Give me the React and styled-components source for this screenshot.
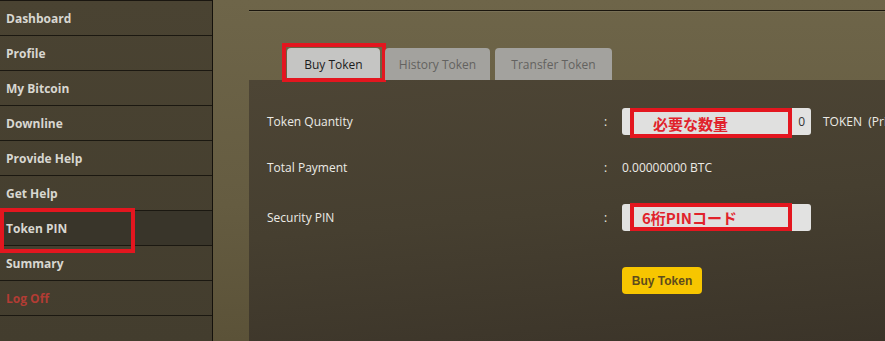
import React from 'react'
import styled, { createGlobalStyle } from 'styled-components'

const GlobalStyle = createGlobalStyle`
  html, body {
    margin: 0;
    padding: 0;
    width: 885px;
    height: 341px;
    overflow: hidden;
    background: #6a6146;
    font-family: "Open Sans", "Noto Sans", sans-serif;
  }
`

const menu = [
  { label: 'Dashboard' },
  { label: 'Profile' },
  { label: 'My Bitcoin' },
  { label: 'Downline' },
  { label: 'Provide Help' },
  { label: 'Get Help' },
  { label: 'Token PIN', active: true, marked: true },
  { label: 'Summary' },
  { label: 'Log Off', danger: true },
]

const Page = styled.div`
  display: flex;
  width: 885px;
  height: 341px;
  overflow: hidden;
`

const Sidebar = styled.nav`
  width: 213px;
  flex-shrink: 0;
  border-right: 1px solid #14110c;
  border-top: 1px solid #1a1610;
  background: linear-gradient(180deg, #4a4332 0%, #433d2e 100%);
  box-sizing: border-box;
`

const MenuItem = styled.div`
  position: relative;
  height: 34px;
  border-bottom: 1px solid #1b1811;
  display: flex;
  align-items: center;
  padding-left: 6px;
  font-size: 12px;
  font-weight: 700;
  color: ${p => (p.$danger ? '#b23c34' : '#d8d7d1')};
  background: ${p => (p.$active ? '#39352a' : 'transparent')};
`

const MenuMark = styled.span`
  position: absolute;
  left: 0;
  top: -3px;
  width: 135px;
  height: 45px;
  border: 4px solid #e3161f;
  box-sizing: border-box;
`

const Main = styled.main`
  flex: 1;
  display: flex;
  flex-direction: column;
  padding-left: 36px;
  background: linear-gradient(180deg, #6e6549 0%, #655c41 60%, #5b5238 100%);
`

const TopRule = styled.div`
  margin-top: 10px;
  height: 1px;
  background: #1a160e;
  box-shadow: 0 1px 0 rgba(255, 255, 255, 0.08);
`

const Tabs = styled.div`
  display: flex;
  margin-top: 37px;
  padding-left: 38px;
  gap: 5px;
`

const Tab = styled.div`
  position: relative;
  height: 32px;
  display: flex;
  align-items: center;
  justify-content: center;
  min-width: ${p => p.$w}px;
  font-size: 12px;
  border-radius: 4px 4px 0 0;
  background: ${p => (p.$active ? '#c5c5c3' : '#a3a29e')};
  color: ${p => (p.$active ? '#1c1c1c' : '#636260')};
`

const TabMark = styled.span`
  position: absolute;
  left: -5px;
  right: -6px;
  top: -5px;
  bottom: -2px;
  border: 4px solid #e3161f;
`

const Panel = styled.section`
  flex: 1;
  padding: 28px 0 0 18px;
  background: linear-gradient(175deg, #4d4535 0%, #463f30 50%, #3b3429 100%);
`

const Row = styled.div`
  display: grid;
  grid-template-columns: 337px 18px auto;
  align-items: center;
  height: 27px;
  margin-top: ${p => p.$mt || 0}px;
  font-size: 12px;
  color: #ecebe6;
`

const Field = styled.div`
  display: flex;
  align-items: center;
`

const Input = styled.div`
  position: relative;
  width: 189px;
  height: 27px;
  background: #e2e2e1;
  border-radius: 3px;
  display: flex;
  align-items: center;
  justify-content: flex-end;
  padding-right: 6px;
  box-sizing: border-box;
  font-size: 12px;
  color: #333;
`

const Note = styled.span`
  position: absolute;
  left: 8px;
  top: ${p => p.$top || 0}px;
  width: 162px;
  height: ${p => p.$h || 30}px;
  border: 4px solid #e3161f;
  box-sizing: border-box;
  background: #e0e0df;
  display: flex;
  align-items: center;
  padding-left: ${p => p.$pad || 4}px;
  font-family: "Noto Sans CJK JP", "Noto Sans", sans-serif;
  font-weight: 700;
  font-size: 15px;
  color: #e1222b;
  line-height: 1;
`

const Unit = styled.span`
  margin-left: 12px;
  white-space: pre;
  font-size: 12px;
`

const BuyButton = styled.button`
  width: 80px;
  height: 27px;
  border: none;
  border-radius: 4px;
  background: #f7c600;
  color: #5e4c1c;
  font-family: "Liberation Sans", Arial, sans-serif;
  font-size: 12px;
  font-weight: 700;
  padding: 0;
`

export default function App() {
  return (
    <>
      <GlobalStyle />
      <Page>
        <Sidebar>
          {menu.map(item => (
            <MenuItem key={item.label} $active={item.active} $danger={item.danger}>
              {item.label}
              {item.marked && <MenuMark />}
            </MenuItem>
          ))}
        </Sidebar>
        <Main>
          <TopRule />
          <Tabs>
            <Tab $active $w={93}>
              Buy Token
              <TabMark />
            </Tab>
            <Tab $w={105}>History Token</Tab>
            <Tab $w={117}>Transfer Token</Tab>
          </Tabs>
          <Panel>
            <Row>
              <span>Token Quantity</span>
              <span>:</span>
              <Field>
                <Input>
                  0
                  <Note $top={0} $h={30} $pad={19}>必要な数量</Note>
                </Input>
                <Unit>TOKEN  (Pri</Unit>
              </Field>
            </Row>
            <Row $mt={19}>
              <span>Total Payment</span>
              <span>:</span>
              <span>0.00000000 BTC</span>
            </Row>
            <Row $mt={23}>
              <span>Security PIN</span>
              <span>:</span>
              <Input>
                <Note $top={-1} $h={28} $pad={8}>6桁PINコード</Note>
              </Input>
            </Row>
            <Row $mt={36}>
              <span />
              <span />
              <BuyButton>Buy Token</BuyButton>
            </Row>
          </Panel>
        </Main>
      </Page>
    </>
  )
}
